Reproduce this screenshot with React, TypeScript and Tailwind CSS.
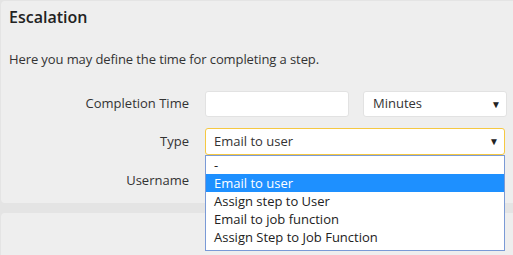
export default function App() {
  const options = [
    "-",
    "Email to user",
    "Assign step to User",
    "Email to job function",
    "Assign Step to Job Function",
  ];
  return (
    <div
      className="w-[513px] h-[255px] overflow-hidden bg-[#e4e4e4] pt-px pl-px text-[13px] text-[#333]"
      style={{ fontFamily: '"Open Sans", sans-serif' }}
    >
      <div className="w-[520px] h-[202px] rounded-[4px] bg-[#eeeeee]">
        <h1 className="px-[8px] pt-[5px] text-[16px] font-semibold leading-[22px] text-[#222]">
          Escalation
        </h1>
        <p className="px-[8px] mt-[22px] leading-[18px] tracking-[-0.1px]">
          Here you may define the time for completing a step.
        </p>
        <div className="mt-[23px] flex flex-col gap-[11px]">
          <div className="flex items-center">
            <label className="w-[188px] text-right">Completion Time</label>
            <input className="ml-[16px] w-[144px] h-[26px] rounded-[3px] bg-white border border-[#e2e2e2] outline-none" />
            <div className="ml-[14px] w-[144px] h-[26px] rounded-[3px] bg-white border border-[#e2e2e2] flex items-center justify-between pl-[9px] pr-[5px]">
              <span>Minutes</span>
              <span className="text-[10px] text-[#222]">▼</span>
            </div>
          </div>
          <div className="flex items-center relative">
            <label className="w-[188px] text-right">Type</label>
            <div className="ml-[16px] w-[300px] h-[27px] rounded-[3px] bg-white border border-[#f5c842] flex items-center justify-between pl-[8px] pr-[5px]">
              <span>Email to user</span>
              <span className="text-[10px] text-[#222]">▼</span>
            </div>
            <ul className="absolute left-[204px] top-[27px] w-[300px] bg-white border border-[#7a9ad6] pt-0 pb-[4px] z-10 leading-[18px]">
              {options.map((o, i) => (
                <li
                  key={o}
                  className={
                    i === 1
                      ? "px-[8px] h-[18px] bg-[#1e90ff] text-white"
                      : "px-[8px] h-[18px] text-[#222]"
                  }
                >
                  {o}
                </li>
              ))}
            </ul>
          </div>
          <div className="mt-[6px] flex items-center h-[18px]">
            <label className="w-[188px] text-right">Username</label>
          </div>
        </div>
      </div>
      <div className="mt-[10px] w-[520px] h-[60px] rounded-[4px] bg-[#eeeeee]" />
    </div>
  );
}
